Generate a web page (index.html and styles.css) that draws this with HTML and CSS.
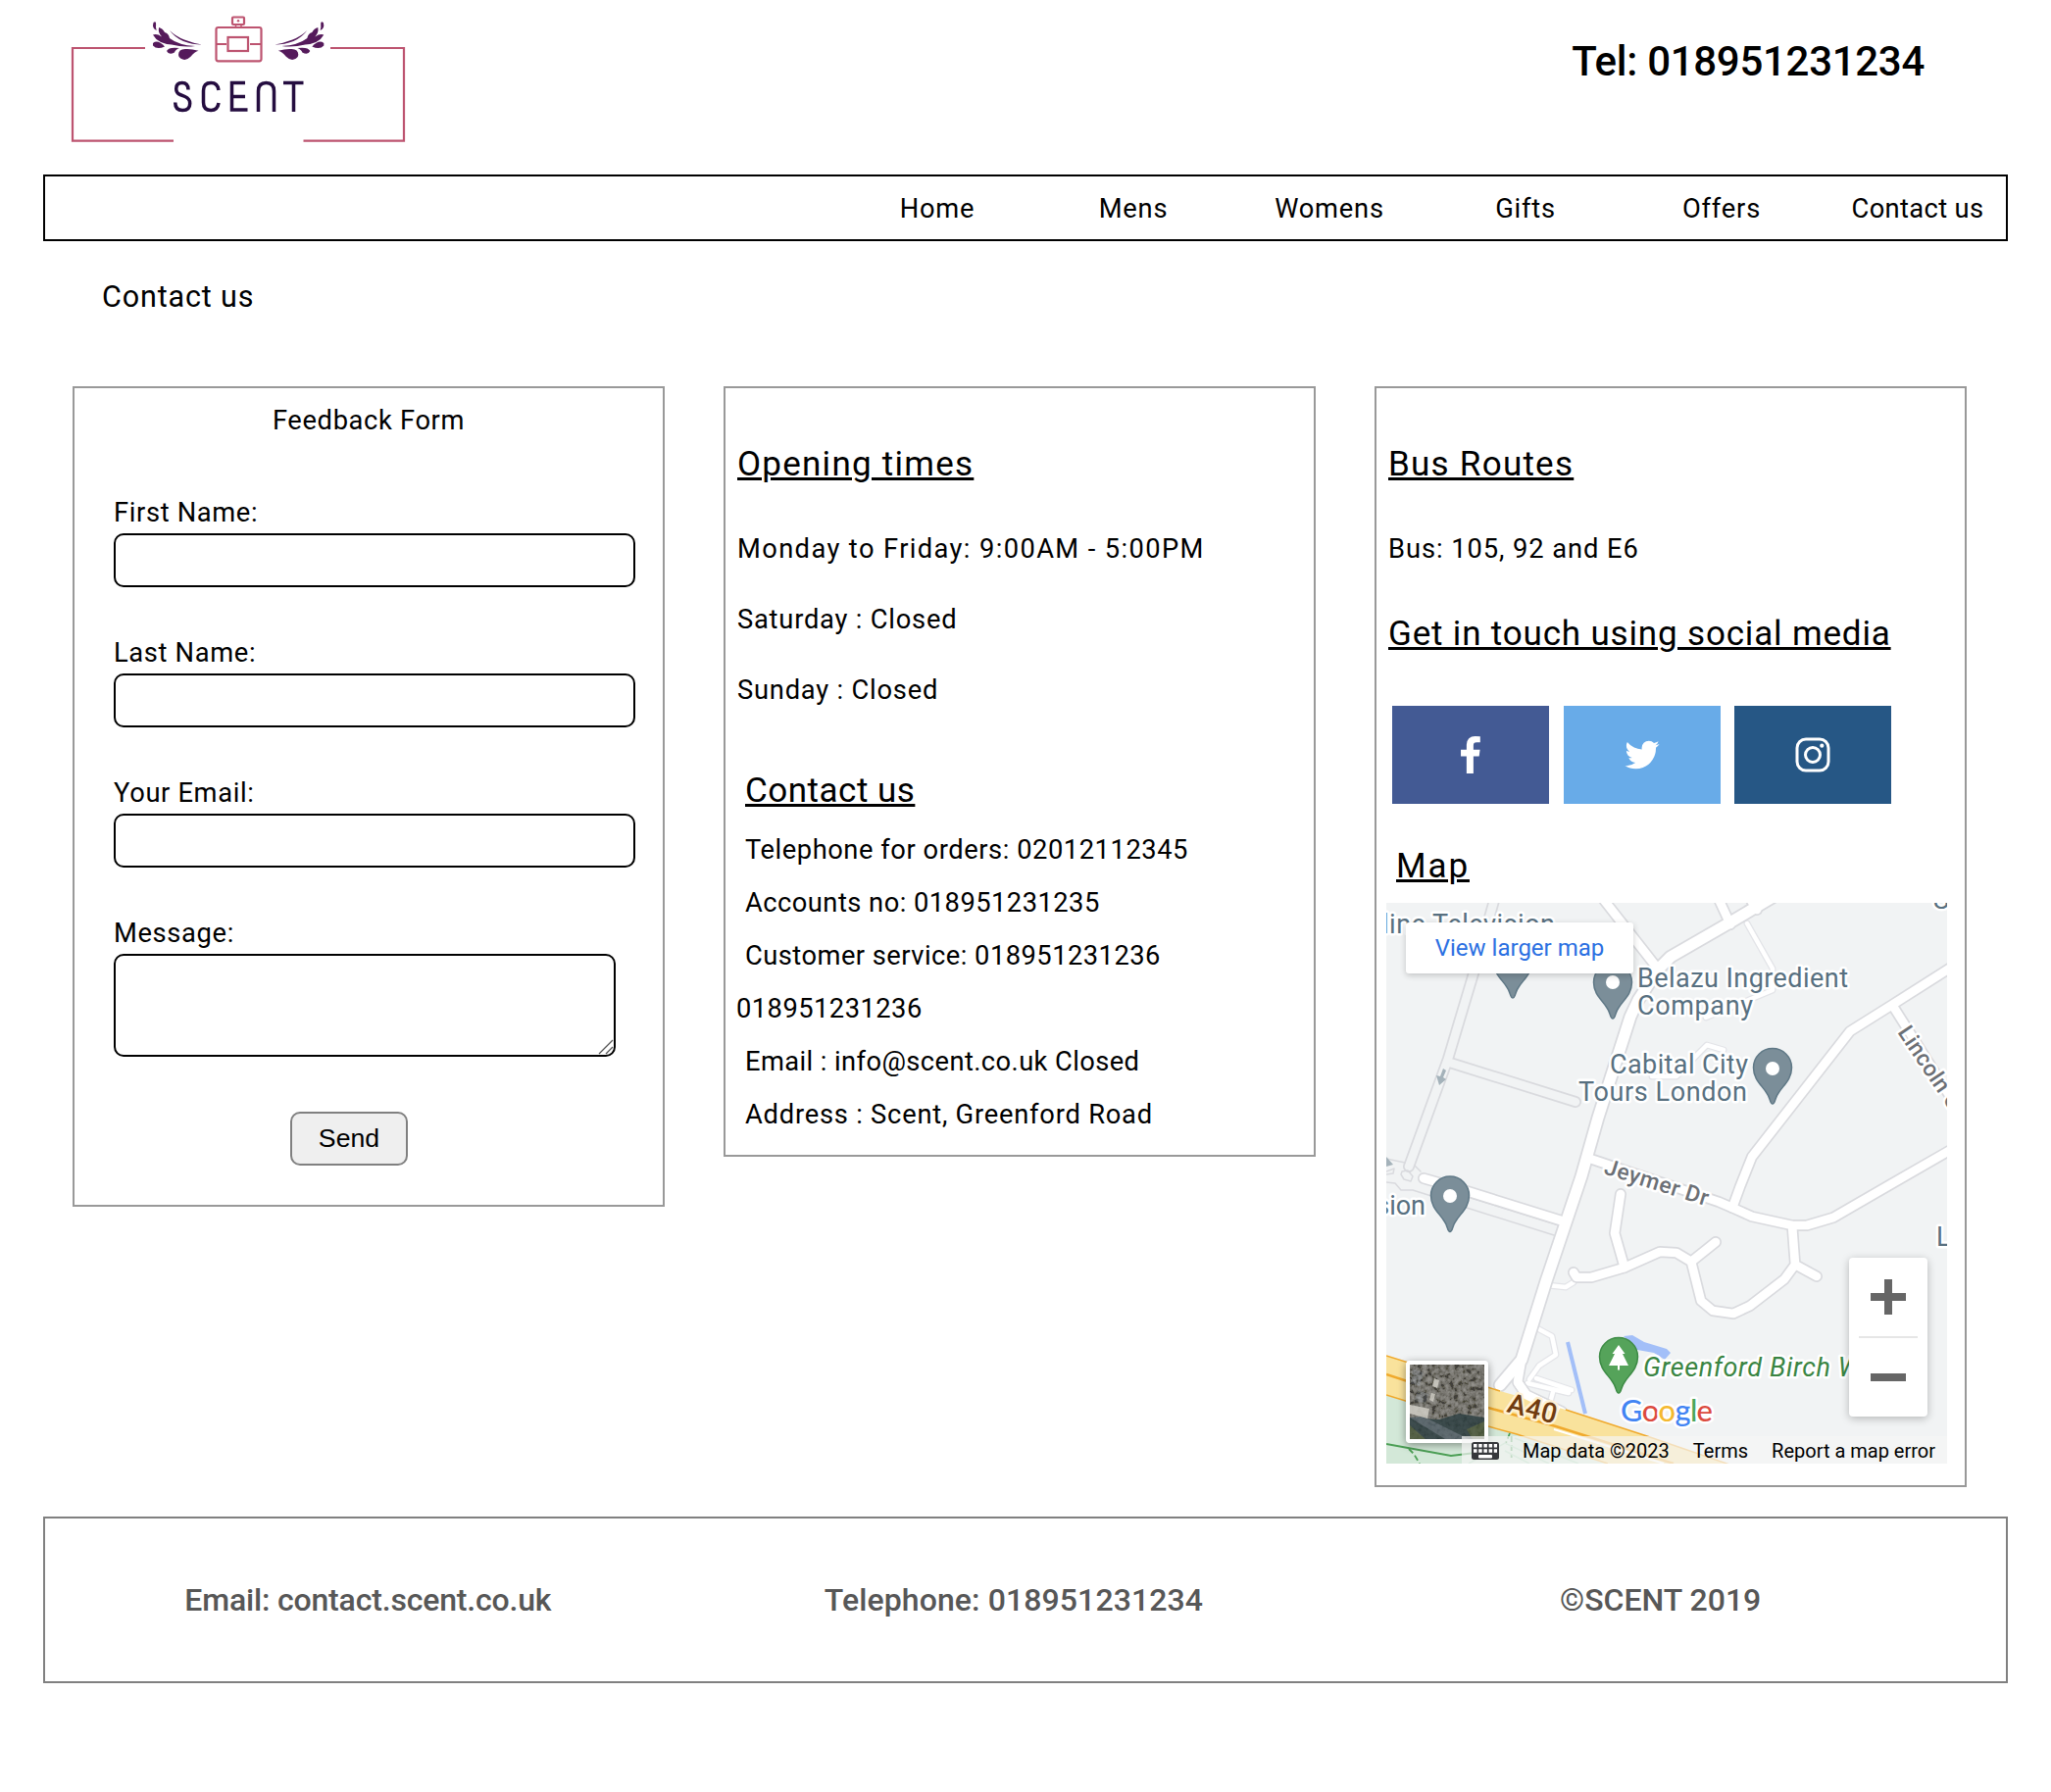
FILE: index.html
```html
<!DOCTYPE html>
<html lang="en">
<head>
<meta charset="utf-8">
<title>Scent - Contact us</title>
<link rel="stylesheet" href="styles.css">
</head>
<body>
<header class="top">
  <svg class="logo" width="344" height="150" viewBox="72 0 344 150" role="img" aria-label="Scent">
    <g fill="none" stroke="#bd5470" stroke-width="2.200">
      <path d="M148 49H74V143.700H177M337 49H412V143.700H309.500"/>
      <rect x="220.500" y="28" width="46" height="34.300" rx="2"/>
      <rect x="232.500" y="38" width="20.500" height="14"/>
      <path d="M220.500 45H231M255 45H266"/>
      <rect x="237" y="17.500" width="12" height="7.500" rx="1"/>
      <path d="M240.500 25v3M246 25v3" stroke-width="1.500"/>
    </g>
    <circle cx="243" cy="21.300" r="1.200" fill="#bd5470"/>
    <g id="wing" fill="#551a5b">
      <path d="M156.500 23q3-2 2.600 2q-.5 3 .6 6q-5-2-3.200-8z"/>
      <path d="M173 31q6 6 15 9.500q9 3.500 18 5q-10 0-19-3.500q-9-4-14-11z"/>
      <path d="M162 28q4 1 6 5q4 1 5 6q9 7 26 8q-12 1.500-24-1.500q-14-1-19-10q4-1.500 9 2q-4-4-3-9.500z"/>
      <path d="M156 44q5-4 12 3.500q-8 3.500-12-1z"/>
      <path d="M170 52q2-4.500 13-3q-4 1.500-5 4.500q-6 3-8-1.500z"/>
      <path d="M182 56q0-7 9-6q5 0 11.500 1.800q-4 1-8 6q-5 5-10 2q-2.500-1.500-2.500-3.800z"/>
    </g>
    <use href="#wing" transform="translate(486.300 0) scale(-1 1)"/>
    <g fill="none" stroke="#250d40" stroke-width="3.500">
      <path d="M192 91.500q0-7-6.300-7q-6 0-6 6q0 4.500 4 6l5 2q5 2 5 7q0 7-7.500 7t-7.500-8"/>
      <path d="M223 92q-1-7.500-7.800-7.500q-7.700 0-7.700 8v12q0 8 7.700 8q6.800 0 7.800-7.500"/>
      <path d="M250 84.500H236.500V112H252.500M236.500 98.500H250"/>
      <path d="M263.500 114V93q0-8.500 8-8.500t8 8.500v21"/>
      <path d="M289 84.500H309.500M299.500 84V114"/>
    </g>
  </svg>
  <p class="tel">Tel: 018951231234</p>
</header>
<nav class="menu">
  <a>Home</a><a>Mens</a><a>Womens</a><a>Gifts</a><a>Offers</a><a class="last">Contact us</a>
</nav>
<h1 class="title">Contact us</h1>
<main class="cards">
  <form class="card form">
    <p class="form-title">Feedback Form</p>
    <div class="field"><label for="fn">First Name:</label><input id="fn" type="text"></div>
    <div class="field"><label for="ln">Last Name:</label><input id="ln" type="text"></div>
    <div class="field"><label for="em">Your Email:</label><input id="em" type="text"></div>
    <div class="field"><label for="ms">Message:</label>
      <div class="message"><textarea id="ms"></textarea>
        <svg class="grip" width="16" height="16" viewBox="0 0 16 16" stroke="#555" stroke-width="1.300"><path d="M1 15L15 1M8 15L15 8"/></svg>
      </div>
    </div>
    <button class="send" type="button">Send</button>
  </form>
  <section class="card info">
    <h2>Opening times</h2>
    <p class="hours h-a">Monday to Friday: 9:00AM - 5:00PM</p>
    <p class="hours h-b">Saturday : Closed</p>
    <p class="hours h-c">Sunday : Closed</p>
    <div class="contact">
      <h2>Contact us</h2>
      <p class="c-a">Telephone for orders: 02012112345</p>
      <p class="c-b">Accounts no: 018951231235</p>
      <p class="c-c">Customer service: 018951231236</p>
      <p class="c-d">018951231236</p>
      <p class="c-e">Email : info@scent.co.uk Closed</p>
      <p class="c-f">Address : Scent, Greenford Road</p>
    </div>
  </section>
  <section class="card travel">
    <h2>Bus Routes</h2>
    <p class="hours bus">Bus: 105, 92 and E6</p>
    <h2 class="touch">Get in touch using social media</h2>
    <div class="social">
      <a class="fb"><svg width="41" height="41" viewBox="0 0 1792 1792"><path transform="translate(-40 40)" fill="#fff" d="M1343 12v264h-157q-86 0-116 36t-30 108v189h293l-39 296h-254v759h-306v-759h-255v-296h255v-218q0-186 104-288.500t277-102.500q147 0 228 12z"/></svg></a>
      <a class="tw"><svg width="40" height="40" viewBox="0 0 1792 1792"><path fill="#fff" d="M1684 408q-67 98-162 167 1 14 1 42 0 130-38 259.500t-115.500 248.500-184.500 210.500-258 146-323 54.500q-271 0-496-145 35 4 78 4 225 0 401-138-105-2-188-64.500t-114-159.500q33 5 61 5 43 0 85-11-112-23-185.500-111.500t-73.500-205.500v-4q68 38 146 41-66-44-105-115t-39-154q0-88 44-163 121 149 294.500 238.500t371.500 99.500q-8-38-8-74 0-134 94.500-228.500t228.500-94.500q140 0 236 102 109-21 205-78-37 115-142 178 93-10 186-50z"/></svg></a>
      <a class="ig"><svg width="36" height="36" viewBox="0 0 36 36" fill="none" stroke="#fff" stroke-width="3"><rect x="2" y="2" width="32" height="32" rx="9"/><circle cx="18" cy="18" r="7.500"/><circle cx="27.300" cy="8.700" r="2.100" fill="#fff" stroke="none"/></svg></a>
    </div>
    <h2 class="map-title">Map</h2>
    <div class="map">
      <svg class="tiles" width="572" height="572" viewBox="1414 921 572 572">
        <defs>
          <g id="pin"><path d="M0 37C-3 37-2 31-6 26C-11 18-19.500 12-19.500 0A19.500 19.500 0 0 1 19.500 0C19.500 12 11 18 6 26C2 31 3 37 0 37Z" stroke-width="1.500"/></g>
          <g id="lanes">
            <path d="M1530 1413L1552 1387L1577 1307L1613 1200L1630 1140L1663 1037L1671 1020L1692 988L1704 976L1763 942L1825 905"/>
          </g>
          <g id="streets">
            <path d="M1632 913L1690 987M1752 915L1765 943M1784 915L1792 928"/>
            <path d="M1452 1202L1480 1210L1592 1245"/>
            <path d="M1622 1182L1753 1226L1767 1232L1787 1241L1828 1250L1843 1250L1870 1242L1927 1209L2000 1167"/>
            <path d="M1767 1232L1775 1210L1787 1180L1887 1052L1930 1025L1996 983M1930 1025L1990 1120"/>
            <path d="M1828 1250L1831 1290L1853 1302M1831 1290L1820 1305L1785 1332L1768 1340L1747 1337L1735 1327L1725 1287L1750 1267M1725 1287L1710 1278L1693 1277L1657 1293L1623 1303L1608 1303L1605 1298"/>
            <path d="M1653 1218L1647 1258L1657 1293"/>
            <path d="M1552 1387L1548 1410L1557 1423L1593 1440"/>
          </g>
          <g id="paths">
            <path d="M1605 1308L1597 1313L1578 1311M1568 1355L1583 1363L1587 1382L1570 1393L1560 1407M1567 1406L1603 1418M1558 1411L1600 1421M1584 1420L1581 1431"/>
            <path d="M1782 942L1808 988L1808 1010L1767 1027L1740 1038M1685 1098L1710 1098L1732 1075L1741 1066L1758 1071"/>
          </g>
          <g id="hollow"><path d="M1525 915L1503 993L1477 1080L1437 1190M1479 1084L1607 1124"/></g>
          <filter id="grain" x="0" y="0" width="1" height="1"><feTurbulence type="fractalNoise" baseFrequency=".22" numOctaves="3" seed="4"/><feColorMatrix values="1.600 0 0 0 -.5 1.600 0 0 0 -.5 1.600 0 0 0 -.53 0 0 0 0 .5"/></filter>
        </defs>
        <rect x="1414" y="921" width="572" height="572" fill="#f1f3f4"/>
        <path fill="#d3e8d8" d="M1414 1423L1518 1455L1547 1463L1640 1493H1414Z"/>
        <g fill="none" stroke-linecap="round" stroke-linejoin="round">
          <use href="#hollow" stroke="#d9dade" stroke-width="12"/>
          <use href="#hollow" stroke="#f1f3f4" stroke-width="8.500"/>
          <g stroke="#d9dade" stroke-width="1.500">
            <path d="M1414 1182L1433 1186M1443 1189L1449 1195M1414 1195L1422 1192L1421 1197L1414 1198M1430 1195L1436 1194L1441 1200L1439 1205L1432 1203L1429 1198ZM1414 1206L1423 1207L1429 1214L1441 1214L1460 1220M1500 1222L1590 1250M1496 1232L1585 1260"/>
          </g>
          <use href="#paths" stroke="#e3e4e8" stroke-width="7"/>
          <use href="#paths" stroke="#fff" stroke-width="4.500"/>
          <use href="#streets" stroke="#d9dade" stroke-width="12"/>
          <use href="#lanes" stroke="#d9dade" stroke-width="14.500"/>
          <use href="#streets" stroke="#fff" stroke-width="8.700"/>
          <use href="#lanes" stroke="#fff" stroke-width="11"/>
        </g>
        <path fill="#f9e29c" d="M1414 1383L1530 1419L1597 1438L1680 1465L1760 1493H1640L1547 1463L1518 1455L1414 1423Z"/>
        <g fill="none" stroke="#f0a92c" stroke-width="1.500">
          <path d="M1414 1383L1530 1419M1597 1438L1680 1465L1770 1496M1414 1423L1518 1455L1547 1463L1640 1493"/>
          <path d="M1414 1402L1518 1436L1587 1455L1707 1493" stroke-width="2.500"/>
          <path d="M1585 1458L1697 1493" stroke="#fff" stroke-width="2"/>
        </g>
        <path d="M1548 1410L1557 1423L1590 1439" fill="none" stroke="#fff" stroke-width="8.700"/>
        <g fill="none" stroke="#4c9f55" stroke-width="1.800"><path d="M1414 1473L1480 1485L1505 1482"/><path d="M1437 1478L1442 1483L1448 1493M1540 1462L1536 1472M1541.700 1465V1487" stroke-dasharray="6 3"/></g>
        <path fill="none" stroke="#a8d5b4" stroke-width="1.500" d="M1498 1493L1535 1472L1580 1493M1535 1480L1560 1493M1545 1467L1610 1493"/>
        <path stroke="#a3bff8" stroke-width="4" d="M1599 1369L1617 1442"/>
        <path fill="#a3bff8" d="M1656 1363L1665 1362L1677 1369L1700 1376L1704 1380L1698 1387L1687 1380L1670 1377Z"/>
        <path fill="#a4b2ba" d="M1472 1090L1475 1092L1472 1099L1475 1101L1468 1107L1465 1097L1469 1098ZM1414 1180L1421 1188L1414 1190Z"/>
        <g fill="#7b8e99" stroke="#5f7886">
          <use href="#pin" x="1645" y="1002"/><use href="#pin" x="1543" y="981"/><use href="#pin" x="1808" y="1089"/><use href="#pin" x="1479" y="1219.500"/>
          <use href="#pin" x="1651" y="1384" fill="#55a35a" stroke="#3d8b45"/>
        </g>
        <g fill="#fff"><circle cx="1645" cy="1002" r="7"/><circle cx="1808" cy="1090" r="7"/><circle cx="1479" cy="1220" r="7"/>
          <path d="M1651 1372L1657.500 1381H1655L1661 1393H1652V1397.500H1650V1393H1641L1647 1381H1644.500Z"/></g>
        <g class="places">
          <text x="1586" y="952" text-anchor="end" textLength="176">line Television</text>
          <text x="1670" y="1007" textLength="215">Belazu Ingredient</text>
          <text x="1670" y="1035" textLength="118">Company</text>
          <text x="1642" y="1095" textLength="141">Cabital City</text>
          <text x="1610" y="1123" textLength="172">Tours London</text>
          <text x="1454" y="1239" text-anchor="end">ision</text>
          <text x="1972" y="927">S</text>
          <text x="1975" y="1271">L</text>
          <text class="park" x="1676" y="1404" textLength="222">Greenford Birch W</text>
          <text class="road" transform="translate(1635 1197) rotate(17.500)" textLength="110">Jeymer Dr</text>
          <text class="road" transform="translate(1935 1053) rotate(56)" textLength="98">Lincoln G</text>
          <text class="a40" transform="translate(1536 1440) rotate(14)" textLength="51">A40</text>
          <text class="google" x="1653" y="1450" textLength="94"><tspan fill="#4284f3">G</tspan><tspan fill="#dc4b3e">o</tspan><tspan fill="#f4b92f">o</tspan><tspan fill="#4284f3">g</tspan><tspan fill="#4ba65a">l</tspan><tspan fill="#dc4b3e">e</tspan></text>
        </g>
      </svg>
      <a class="larger">View larger map</a>
      <div class="zoom">
        <svg width="36" height="36"><path fill="#666" d="M14 0h8v14h14v8H22v14h-8V22H0v-8h14z"/></svg>
        <i></i>
        <svg width="36" height="36"><path fill="#666" d="M0 14h36v8H0z"/></svg>
      </div>
      <svg class="aerial" width="76" height="76" viewBox="0 0 76 76">
        <rect width="76" height="76" fill="#65625c"/>
        <path fill="#70747c" opacity=".6" d="M3 4L14 8L10 22L1 19ZM8 26L19 30L16 40L5 37Z"/>
        <rect width="76" height="76" filter="url(#grain)" opacity=".7"/>
        <g opacity=".8">
          <path fill="#2c3f42" d="M0 54L30 56L50 50L76 54V76H0Z"/>
          <path fill="#56656d" d="M0 54L14 53L60 76H36Z"/>
          <path fill="#4c5b3c" d="M58 66L76 58V76H64ZM0 62L16 76H0Z"/>
        </g>
        <path fill="#d0cec5" opacity=".85" d="M0 41L20 45L18 55L0 50ZM25 14l5 2-2 8-5-2zM22 29l4 1-2 8-4-2z"/>
      </svg>
      <div class="credits">
        <svg width="28" height="18" viewBox="0 0 28 18"><rect width="28" height="18" rx="2.500" fill="#35373b"/><path stroke="#fff" stroke-width="3.500" stroke-dasharray="3.500 1.700" d="M2 3.800H26M2 9H26"/><rect x="7" y="13" width="14" height="3.500" rx="1" fill="#fff"/></svg>
        <span class="data">Map data ©2023</span><span class="terms">Terms</span><span class="report">Report a map error</span>
      </div>
    </div>
  </section>
</main>
<footer class="bottom">
  <span class="f-a">Email: contact.scent.co.uk</span><span class="f-b">Telephone: 018951231234</span><span class="f-c">©SCENT 2019</span>
</footer>
</body>
</html>
```
FILE: styles.css
```css
* { box-sizing: border-box; }
body { margin: 0; background: #fff; color: #000; font: 27.3px/34px Roboto, "Liberation Sans", sans-serif; }
h1, h2, p { margin: 0; }

.top { height: 178px; padding-left: 72px; padding-right: 129px; display: flex; justify-content: space-between; align-items: flex-start; }
.logo { display: block; }
.tel { margin-top: 39px; font-size: 42px; line-height: 48px; font-weight: 500; letter-spacing: -.3px; }

.menu { display: flex; align-items: center; height: 68px; margin: 0 44px; padding: 2px 0 0 810px; border: 2px solid #000; }
.menu a { flex: 0 0 200px; text-align: center; letter-spacing: .8px; }
.menu .last { letter-spacing: .35px; }

.title { margin: 37px 0 0 104px; font-size: 30.5px; line-height: 40px; font-weight: 400; letter-spacing: .85px; }

.cards { display: grid; grid-template-columns: repeat(3, 604px); column-gap: 60px; align-items: start; margin: 71px 0 0 74px; }
.card { border: 2px solid #999; }

.form { display: flex; flex-direction: column; padding: 16px 28px 40px 40px; }
.form-title { margin: 0 0 10px -12px; text-align: center; letter-spacing: .65px; }
.field { display: flex; flex-direction: column; gap: 4px; margin-top: 50px; letter-spacing: .65px; }
.field input { width: 532px; height: 55px; border: 2px solid #000; border-radius: 10px; background: #fff; }
.message { position: relative; width: 512px; height: 105px; }
.message textarea { display: block; width: 512px; height: 105px; border: 2px solid #000; border-radius: 10px; resize: none; background: #fff; }
.grip { position: absolute; right: 2px; bottom: 2px; }
.send { width: 120px; height: 55px; margin: 56px 0 0 180px; padding: 0; border: 2px solid #808080; border-radius: 10px; background: #efefef; color: #000; font: 26.67px "Liberation Sans", Arial, sans-serif; }

h2 { font-size: 35px; line-height: 40px; font-weight: 400; letter-spacing: 1.25px; text-decoration: underline; text-decoration-thickness: 3px; text-underline-offset: 2px; }
.info, .travel { padding: 58px 12px 14px; }
.hours { margin-top: 38px; }
h2 + .hours { margin-top: 49px; }
.h-a { letter-spacing: 1.38px; }
.h-b, .h-c { letter-spacing: .78px; }
.contact { margin-top: 66px; padding-left: 8px; line-height: 54px; letter-spacing: .47px; }
.contact h2 { margin-bottom: 13px; letter-spacing: .5px; }
.contact .c-a { letter-spacing: .55px; }
.contact .c-d { margin-left: -9px; }
.contact .c-e { letter-spacing: .41px; }
.contact .c-f { letter-spacing: .77px; }

.travel { padding-bottom: 22px; }
.bus { letter-spacing: .93px; }
.touch { margin-top: 50px; letter-spacing: .83px; }
.social { display: flex; gap: 14.500px; margin: 53px 0 0 4px; }
.social a { display: flex; align-items: center; justify-content: center; width: 160px; height: 100px; }
.fb { background: #435a94; }
.tw { background: #68abe8; }
.ig { background: #265785; }
.map-title { margin: 44px 0 17px 8px; letter-spacing: 1.9px; }

.map { position: relative; width: 572px; height: 572px; margin-left: -2px; overflow: hidden; }
.tiles { display: block; }
.places text { font: 27px Roboto, sans-serif; fill: #587080; stroke: #fff; stroke-width: 5px; stroke-linejoin: round; paint-order: stroke; }
.places .park { font-style: italic; fill: #3a8543; }
.places .road { font-size: 23px; font-weight: 500; fill: #6c7076; }
.places .a40 { font-size: 28px; font-weight: 500; fill: #713c10; stroke: #fff2d4; }
.places .google { font: 500 31px Lato, sans-serif; }
.larger { position: absolute; left: 20px; top: 20px; width: 232px; height: 52px; border-radius: 3px; background: #fff; box-shadow: 0 2px 6px rgba(0,0,0,.2); color: #2b70e2; font-size: 24px; line-height: 52px; text-align: center; }
.zoom { position: absolute; left: 472px; top: 362px; width: 80px; height: 162px; border-radius: 4px; background: #fff; box-shadow: 0 2px 8px rgba(0,0,0,.25); display: flex; flex-direction: column; align-items: center; justify-content: space-between; padding: 22px 10px; }
.zoom i { width: 60px; height: 2px; background: #e6e6e6; }
.aerial { position: absolute; left: 20px; top: 467px; width: 84px; height: 84px; border: 4px solid #fff; border-radius: 4px; box-shadow: 0 2px 8px rgba(0,0,0,.4); }
.credits { position: absolute; right: 0; bottom: 0; width: 495px; height: 28px; padding: 2px 12px 0 10px; background: rgba(245,245,245,.7); display: flex; align-items: center; justify-content: space-between; font-size: 20px; line-height: 26px; }

.bottom { display: grid; grid-template-columns: repeat(3, 1fr); align-items: center; height: 170px; margin: 30px 44px 0; padding: 0 24px 1px 0; border: 2px solid #808080; color: #575757; font-size: 32px; font-weight: 500; text-align: center; }
.f-a { letter-spacing: -.18px; }
.f-b { letter-spacing: .1px; }
.f-c { padding-left: 2px; }
```
